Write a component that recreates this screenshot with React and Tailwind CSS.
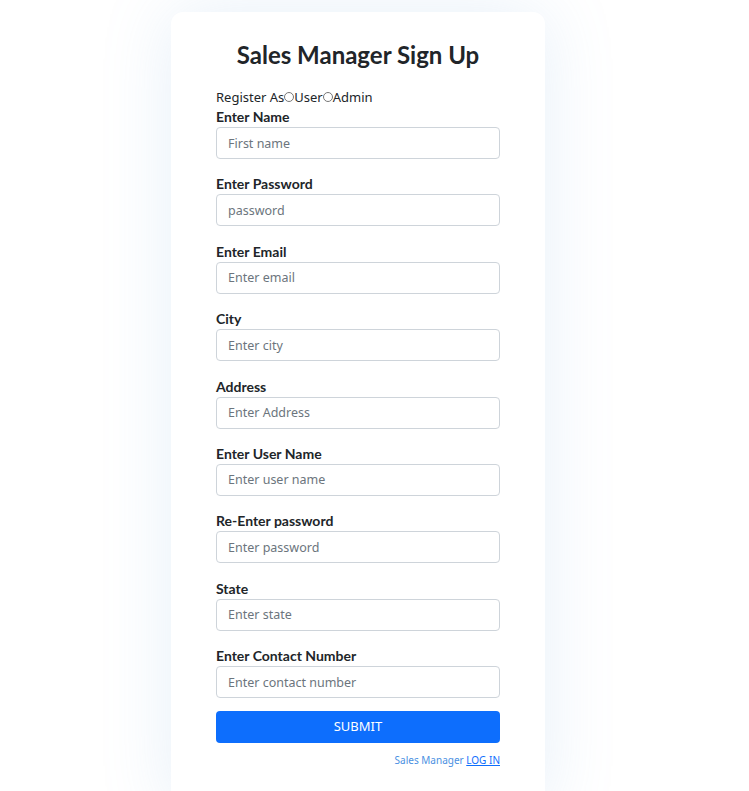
import React from 'react';

const fields = [
  { label: 'Enter Name', placeholder: 'First name', type: 'text' },
  { label: 'Enter Password', placeholder: 'password', type: 'password' },
  { label: 'Enter Email', placeholder: 'Enter email', type: 'email' },
  { label: 'City', placeholder: 'Enter city', type: 'text' },
  { label: 'Address', placeholder: 'Enter Address', type: 'text' },
  { label: 'Enter User Name', placeholder: 'Enter user name', type: 'text' },
  { label: 'Re-Enter password', placeholder: 'Enter password', type: 'password' },
  { label: 'State', placeholder: 'Enter state', type: 'text' },
  { label: 'Enter Contact Number', placeholder: 'Enter contact number', type: 'text' },
];

const heading = { fontFamily: 'Lato, "Noto Sans", sans-serif' };

export default function App() {
  return (
    <div className="min-h-[791px] bg-white flex pl-[171px] pt-3 overflow-hidden" style={{ fontFamily: '"Noto Sans", "Open Sans", sans-serif' }}>
      <div className="w-[374px] h-[800px] shrink-0 bg-white rounded-xl shadow-[0_0_70px_rgba(120,170,220,0.18)] px-[45px] pt-[25px]">
        <h1 className="text-center text-[24px] font-bold text-[#212529] leading-[36px]" style={heading}>
          Sales Manager Sign Up
        </h1>
        <div className="mt-[14px] text-[13px] text-[#212529] leading-[20px] flex items-center">
          <span>Register As</span>
          <input type="radio" name="role" className="w-[10px] h-[10px] m-0" />
          <span>User</span>
          <input type="radio" name="role" className="w-[10px] h-[10px] m-0" />
          <span>Admin</span>
        </div>
        <form className="flex flex-col">
          {fields.map((f) => (
            <div key={f.label} className="mb-[15.4px]">
              <label className="block text-[14px] font-bold text-[#212529] leading-[20px]" style={heading}>{f.label}</label>
              <input
                type={f.type}
                placeholder={f.placeholder}
                className="w-full h-[32px] border border-[#ced4da] rounded-[4px] px-[11px] text-[12.5px] text-[#212529] placeholder:text-[#6c757d] outline-none"
              />
            </div>
          ))}
          <button type="button" className="-mt-[3px] w-full h-[32px] bg-[#0d6efd] text-white text-[13px] rounded-[4px]">
            SUBMIT
          </button>
          <p className="text-right text-[10px] text-[#4a90e2] mt-[10px]">
            Sales Manager <a href="#" className="text-[#0d6efd] underline">LOG IN</a>
          </p>
        </form>
      </div>
    </div>
  );
}
